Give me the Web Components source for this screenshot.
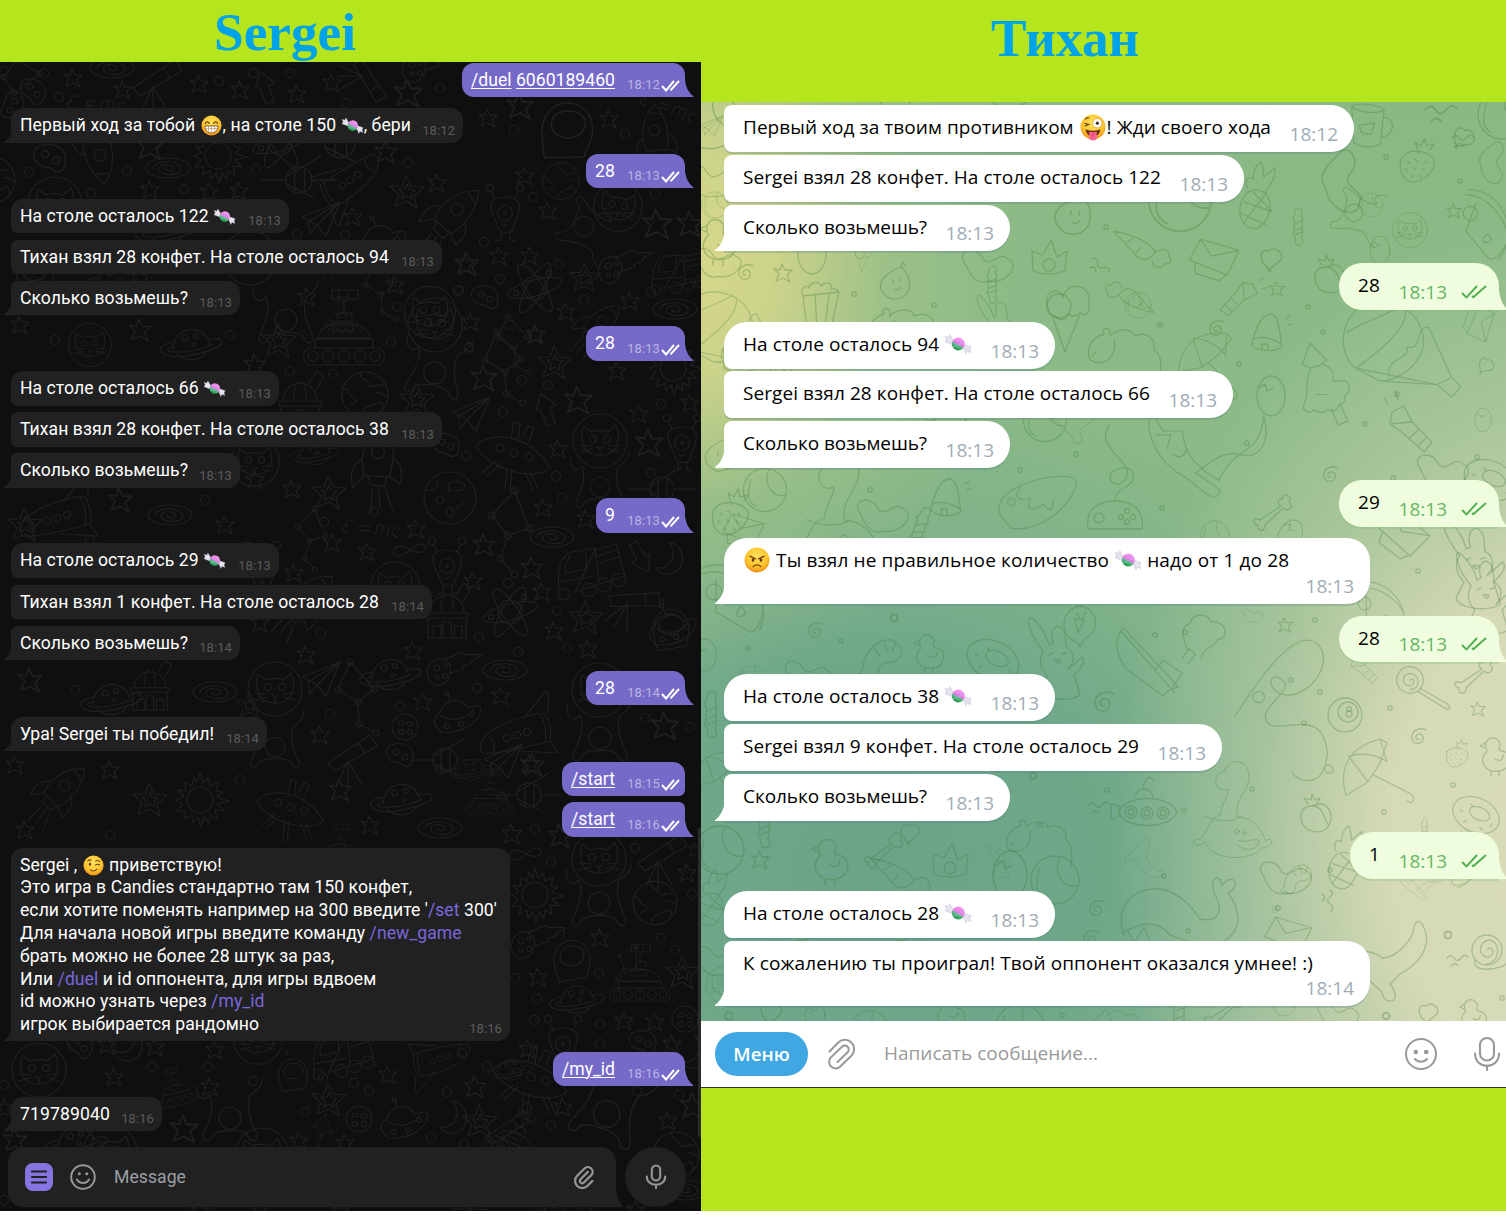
<!DOCTYPE html>
<html lang="ru">
<head>
<meta charset="utf-8">
<title>Candies duel</title>
<style>
html,body{margin:0;padding:0;background:#fff;overflow:hidden}
</style>
</head>
<body>
<duel-board></duel-board>
<script>
const SHAPES = {
  o:'<circle r="4.5"/>',
  d:'<circle r="2.2"/>',
  star:'<path d="M-1-9 2-3 9-3 4 2 7 9 0 5-7 8-4 1-9-4-3-3Z"/>',
  dstar:'<path d="M-1-17 4-6 17-5 7 4 10 16 0 9-12 14-8 3-17-6-5-6ZM0-8 2-3 8-2 4 2 5 7 0 4-5 7-4 1-8-3-2-3Z"/>',
  spiral:'<path d="M1 1c-2 1-4-1-3-3 2-4 8-2 7 3-1 6-10 6-11-1C-7-8 2-11 8-8"/>',
  galaxy:'<ellipse rx="22" ry="10"/><path d="M-15 0c3-9 27-8 28 1 0 8-24 7-22-1 3-5 15-4 14 1-1 3-9 2-8-1"/>',
  planet:'<path d="M-17 4C-16-20 15-22 19-2M-13 9C-4 18 12 16 17 6"/><path d="M-17-3C-32 0-34 8-20 11-4 14 30 4 32-2 32-7 24-7 18-5M-18 2c-7 2-5 5 3 5C0 8 17 2 22-1"/><circle cx="-5" cy="-7" r="3"/><circle cx="6" cy="-9" r="2.4"/><circle cx="4" cy="0" r="2"/>',
  globe:'<circle r="23"/><path d="M-22-6c8-1 4 7 10 8s3 7-3 8M-4-22c-1 8 6 5 8 11s8-2 14 2M-4 21C-2 10 6 12 12 8s6 6 5 8M12-2c5-2 6 3 10 3"/>',
  moonball:'<circle r="26"/><circle cx="-10" cy="2" r="4"/><path d="M-24-8c8 3 13-4 11-9M-2-14l8-3 9 3-2 6-14 1ZM6 12c0-6 8-3 8-8M-4 12c4-5 8-1 7 4s-8 3-7-4"/>',
  small:'<circle r="13"/><ellipse cx="-4" cy="-4" rx="3" ry="2"/><ellipse cx="5" cy="-3" rx="3" ry="2"/><ellipse cx="-4" cy="5" rx="3" ry="2.4"/><ellipse cx="5" cy="5" rx="2.4" ry="3"/>',
  sun:'<circle r="13"/><path d="M0-27 3-17 8-22 10-14 18-17 16-9 23-8 17-3 29 1 17 4 24 11 15 10 17 19 10 15 9 23 4 17 1 27-2 17-7 23-8 15-16 19-14 11-23 11-17 4-24 0-16-3-22-10-14-9-15-18-8-14-6-23-3-17Z"/>',
  rocket:'<path d="M-14 12C-16-10-2-28 12-34 20-18 17 2 8 17ZM6 17l-3 8-13-4-1-9M-14-3c-11 4-13 16-12 24l12-9M14 0c8 6 7 17 3 25L8 17M4-27l12 6"/><circle cx="2" cy="-7" r="6"/><path d="M-9 26l-5 20M-3 27l-2 16M3 28l3 20"/>',
  shuttle:'<path d="M-40 20C-38 4-8-10 24-14c6 8 8 18 6 28C0 22-26 28-38 26ZM4-9 26-36C30-34 28-22 28-14M0 24l38 2-8-12M-32 10c6 0 8 8 5 16M20-13c5 8 7 18 5 28"/><circle cx="-13" cy="11" r="3.6"/><circle cx="-3" cy="8" r="3.6"/><circle cx="7" cy="5" r="3.6"/>',
  ufo:'<path d="M-37-9C-30-24 16-26 37 12 20 26-22 14-37-9ZM-2-19l3-15 6 2-2 16M9-18l6-12 6 2-5 14M-17 5l-14 12M-12 7l-14 13M-6 12l-2 22M-1 13l-2 22M12 16l8 18M17 15l8 18"/><circle cx="-13" cy="-8" r="4"/><circle cx="1" cy="-3" r="4"/><circle cx="16" cy="1" r="4"/>',
  saucer:'<path d="M-22 10c-3-9 5-12 5-12 2-12 20-18 28-5 5-1 14-5 13 2-2 13-20 24-40 22Z"/><path d="M-17 0C-4 8 10 4 17-7"/><circle cx="-10" cy="11" r="2.5"/><circle cx="4" cy="9" r="2.5"/><circle cx="15" cy="-1" r="2.5"/><path d="M-6-13l-3-7"/><circle cx="-10" cy="-22" r="2"/>',
  cat:'<circle r="27"/><path d="M-17 4c-2-8-2-14 0-19l8 6c5-2 12-2 17 0l8-7c3 6 3 14 1 20-4 13-29 14-34 0Z"/><circle cx="-7" cy="-2" r="3.5"/><circle cx="7" cy="-2" r="3.5"/><path d="M-3 6l3 2 3-2M0 8v5M-8 8l-12 3M8 8l12 3M-8 5l-12-1M8 5l12-1"/>',
  body:'<path d="M-20-15C-29-4-36-20-32-25M-20-15c4 9 1 23-6 38-4 8 5 11 8 3 4-7 31-8 36 0 3 9 12 4 8-4C18 7 17-5 20-15c8-4 13-12 12-17"/><circle cy="8" r="11"/>',
  alien:'<path d="M-14-10c4-8 24-8 28 0 2 9-4 18-6 26-2 5-12 5-14 0-3-9-9-16-8-26ZM-10-14l-4-8M10-14l4-8M-4 18v9l-6 1M5 18v9l6 1"/><circle cx="-15" cy="-25" r="3.5"/><circle cx="15" cy="-25" r="3.5"/><circle r="7.5"/><circle r="1.3"/><path d="M-3 12q3 3 5-1"/>',
  rover:'<path d="M-33 15h66c10 0 10 17 0 17h-66c-10 0-10-17 0-17ZM-29 14V6h58v8M-26 5C-24-16 24-16 26 5ZM-11-2v-7h20v7ZM-6-14v-6H8v6M0-20v-13M-12-34v-9H14v9ZM-5-34v-8M4-34v-8"/><circle cx="-31" cy="23.500" r="5"/><circle cx="-16" cy="23.500" r="6"/><circle cy="23.500" r="6"/><circle cx="16" cy="23.500" r="6"/><circle cx="31" cy="23.500" r="5"/>',
  truck:'<path d="M-33 22C-36-8-28-16-20-18L3-22l4 34M3-20 24-26l9 32-50 16ZM-22-14c-4 6-6 10-4 17l20-4 0-16M-32 12l35-6M5-14l20-6M7-7l20-6"/><circle cx="-28" cy="24" r="6"/><circle cx="-3" cy="20" r="7"/><circle cx="12" cy="15" r="7"/><circle cx="27" cy="10" r="7"/>',
  house:'<path d="M-21 3h42v5h-42ZM-17 2C-17-20 17-20 17 2M-19 9v19h38V9M-6 0C-6-18-1-16-1-16M6 0C6-18 2-16 2-16M8-14l9-13 7 5-8 14M-14 28V16h8v12M-4 28V12h8v16M7 28V16h8v12"/>',
  plane:'<path d="M-20-5 18-20 4 14-5 3ZM-5 3 18-20-14 0-12 12-5 3"/>',
  const:'<path d="M0-28 24-1 8 12-12 0ZM8 12 9 34 24 42"/><circle cy="-28" r="3"/><circle cx="24" cy="-1" r="3"/><circle cx="8" cy="12" r="3"/><circle cx="-12" r="3"/><circle cx="9" cy="34" r="3"/><circle cx="26" cy="43" r="3"/>',
  atom:'<circle r="12"/><ellipse rx="28" ry="8" transform="rotate(-15)"/><ellipse rx="28" ry="8" transform="rotate(55)"/><ellipse rx="28" ry="8" transform="rotate(120)"/><circle cx="-19" cy="5" r="2.6"/><circle cx="14" cy="-15" r="2.6"/>',
  comet:'<path d="M-20 10c-6-8-1-20 8-22 8-1 15 6 12 14C-1 13-13 19-20 10ZM-6-12C4-12 4-20 14-18 12-14 22-18 32-16 24-12 20-10 22-8c-8 2-10 4-8 6-5 1-8 3-14 4"/><circle cx="-13" cy="-3" r="3"/><circle cx="-5" cy="-5" r="2"/><circle cx="-13" cy="6" r="2"/><circle cx="-5" cy="5" r="2.5"/>',
  sat:'<circle r="12"/><path d="M-10-4 20-22M-11 4l24 12M12 0h22M-4-11v22M5-11v22M-12 0h-22"/>',
  moon:'<path d="M1-16C18-12 20 12 2 16c-7 1-12-2-14-6C6 12 9-8 1-16Z"/>',
  arrow:'<path d="M-7-18-12-2h5l6 16 8-3-5-15 6-3Z"/>',
  inf:'<path d="M0 0C-16-12-22 8-10 6-3 5 3-5 10-6c10 0 6 14-10 6Z"/>',
  scope:'<path d="M-22 8 8-12l7 10-30 18ZM8-12l12-8 7 11-12 7M-2 6l-12 26M-2 6v28M-2 6l14 24"/>',
  astro:'<path d="M-18 6c-2-30 38-30 36 0l-3 14-28 5ZM-12 0c0-14 24-14 24-3 0 15-24 15-24 3Z"/><path d="M-8-20v-8"/>',
  emc:'<path d="M-18-6c-8-3-12 2-7 5-8 0-8 8 0 7M-10-1h10M-10 4h10M6 8l2-9q6-4 6 2l-1 7M14 0q7-4 7 2l-2 8M33 2c-7-5-12 8-3 9"/>',
  rock:'<path d="M-13-6C-8-15 12-13 13 0 13 13 6 14 0 8-8 8-16 2-13-6Z"/><circle cx="-4" cy="-3" r="3"/><circle cx="5" cy="2" r="3"/>',
  // playful set
  berry:'<path d="M-16-6C-8-15 8-15 18-4 20 8 8 20-6 20-16 18-20 4-16-6ZM2-10l-4-12 6 4 4-8 2 8 8-2-4 6M-10-2l2 2M-2-4l2 2M8-2l2 2M-12 6l2 2M-3 5l2 2M6 6l2 2M-6 13l2 2M3 13l2 2"/>',
  pine:'<path d="M2-8c16 3 16 30-2 40-18 2-22-20-14-33 4-7 10-8 16-7ZM-14 4l30 10M-17 16l26 12M10-6-14 26M-4-6l20 20M-10-10c-4-10 2-14 6-10 0-8 2-14 8-18 3 6 3 10 3 16l12-10c1 10-4 18-11 26"/>',
  candy:'<path d="M-6-14l2-8q5-4 8 1l-1 7q3 3 1 6v14q1 3-1 6l2 8q-4 5-9 1l-1-8q-4-3-1-6V-8q-3-3 0-6ZM-5-4l10-4M-5 4l10-4M-5 10l10-4"/>',
  carrot:'<path d="M-30-22C-6-18 10-8 14 0 8 10-2 10-8 2ZM14 0c10-6 16 0 14 4 6 6 0 10-4 8-2 6-12 6-13-2M-16-10l6-4M-6 0l4-4"/>',
  mail:'<path d="M-16-20 24-8 12 18-28 2ZM-16-20l11 18 29-6M-22 6v10L4 24l6-6"/>',
  heart:'<path d="M0 9C-14-2-9-12-2-9 3-14 12-8 9-1L-3 9Z"/>',
  balloon:'<path d="M-30-42C-56-24-52 16-34 26L-8 40c28 0 58-30 46-58C28-46-8-54-30-42ZM-34 26 56 44 72 36 46-20M-8 40 56 44M16-44C2-34-40-20-44-14M20-40C26-16-20 14-34 26M2 36c-4-24 24-18 20-34 18 6 8-22 24-22M56 44l16 14 10-12-10-10"/>',
  tree:'<path d="M-16-44-24-22-15-18c-8 20 0 22-8 42q5 8 12 2 8 6 14 0 9 4 12-5 8-2 5-9 10-7 2-16L8-4Q12-18-4-22l6-4ZM6 24l8 18 10-4-8-18M-15-18l10-3M-10 10h12"/>',
  egg:'<ellipse rx="14" ry="20"/><path d="M-12-8l6-4 2 7 6-3"/>',
  bell:'<path d="M-14 10C-12-2-6-20 4-21S14 4 16 12C8 18-10 16-14 10ZM-12 4C-4 0 8 4 15 9M-4 14v-5h6v6M20-16l4-3M22-10l4-1"/>',
  umb:'<path d="M0-42C-34-34-50-10-40 24L-14 8 0-14 8-38ZM-37-22C-18-28-2-22 8-16L0-42M-37-22-14 8M-8 0 36 22c8 7 0 14-4 8"/>',
  torch:'<path d="M-20-18-8-24 0-8 20 12 12 22-8 4-22-6ZM-22-6 0-8M6 0-2 8M14 8 6 16M-24-26l-4-6M-14-30l-2-8"/>',
  bone:'<path d="M-14 8C-22 4-22 12-16 13-18 20-8 20-9 13L9-4c5 5 12-2 6-6 4-6-6-11-7-3-7 0-3 7-1 7Z"/>',
  fish:'<path d="M-58-18C-62-36-54-40-50-30l6 10h20c2 26 18 40 38 52C36-10 56 10 62-36 70-4 54 12 34 4 12 2-4 22-10 24L16 42q-4 12-12 6L-22 28C-44 16-54-2-58-18ZM-52-16l16 0-4 14M-34 4q10 8 14-4"/>',
  pad:'<path d="M-27 14C-30-4-18-14 0-14S30-4 27 14ZM0-14C0-30 22-26 18-42 14-52-10-46-4-34 2-26 14-34 12-46-4-70-16-70-6-90"/><circle cx="-16" cy="3" r="5"/><circle cx="12" cy="-4" r="2.500"/><circle cx="12" cy="7" r="2.500"/><circle cx="6" cy="2" r="2.500"/><circle cx="18" cy="2" r="2.500"/>',
  boat:'<path d="M-44-34C-54-22-54-8-40 10L-2 38c4-6 10-8 16-10ZM-46-30 10 34M-10 10l8-10 20 14-10 14M18-2l8-10 6 6-8 10M24-10c-8-18-6-26 2-28 4-14 22-10 22-2 18-2 20 18 8 18C52-12 40-14 38-2"/>',
  rod:'<path d="M-60 80C-40 50-10 4 14 0 44 0 38 48 0 58-30 60-26 26-8 44 0 56-44 76-22 90-6 94 20 80 32 100 44 126 30 130 36 140 50 142 40 126 34 134 28 154 4 150 0 138"/><circle cx="-35" cy="60" r="6"/>',
  dino:'<path d="M0-40C10-62 40-50 30-20 20 0 14 4 16 22 36 24 48 36 54 54 64 48 68 60 50 64 30 84-20 80-26 56-40 66-48 54-36 52-24 52-24 24-6 20-4 0 6-6 4-14-14-8-20-34 0-40ZM-26 22q30 12 48 0M18 54c10 4 20-4 28 0-4 16-20 14-30 6"/><circle cx="16" cy="42" r="3"/><circle cx="26" cy="44" r="2"/>',
  sub:'<path d="M-26 0C-20-18 24-18 32 0 26 18-22 18-26 0ZM-34-8l8 2v10l-8 4ZM-10-15C-8-26 6-26 8-15M-2-23c0-8 4-10 6-12l5 3"/><circle cx="-14" r="6"/><circle cx="-14" r="3"/><circle cx="2" cy="1" r="6"/><circle cx="2" cy="1" r="3"/><circle cx="18" cy="1" r="6"/><circle cx="18" cy="1" r="3"/>',
  peach:'<path d="M-4-10C-20-10-18 12-4 15 12 20 20 2 12-8 8-14 0-12-4-10ZM-4-10C8-10 8 4 12 8M-8-12-12-18-5-16-4-22-1-16 4-18 0-10"/>',
  lolly:'<circle r="14"/><path d="M0 0c5-4 6 6-1 6-8-1-8-12 1-13 11 0 12 17 0 17M11 9l28 16q6 6 0 6L8 12"/>',
  ball8:'<circle r="17"/><circle cx="3" cy="-3" r="10"/><circle cx="4" cy="-6" r="2.4"/><circle cx="4" cy="-1" r="3"/>',
  whale:'<path d="M-36 20C-46-10-26-28 0-26 18-24 34-6 40 4 60 8 64-6 54-22 50-36 58-44 62-30 74-44 82-28 68-22 88 6 74 24 58 28M-38 18C-14 4 0 8 10 20L26 26M-32 16l6 12 10-16 6 14"/><circle cx="28" cy="16" r="2"/>',
  chick:'<path d="M-8-4C-14-16 0-22 5-12c0 6-3 6 2 8 12 1 10 20-4 20-14 2-20-12-11-20ZM-10-12l-5 3 5 2M-4 16v5M4 16v5M0 4q8 4 8-4"/>',
  donut:'<ellipse rx="27" ry="19" transform="rotate(25)"/><ellipse cx="3" cy="-3" rx="12" ry="7" transform="rotate(25)"/><path d="M-18-6l3 2M-14 8l3-2M4 14l3 2M18 10l-2 3M-6-12l2 2"/>',
  bunny:'<path d="M-14-4C-34-30-30-44-22-34-14-26-10-18-8-10L-4-12C-10-28 4-36 8-20L9-8c10 6 8 16 2 22l14-12c6 4-4 14-8 18l6 20c-12 8-40 4-40-6l7-14C-18 12-18 2-14-4ZM-8 0l4-2M5-1l4-1M-2 5h6q-2 6-6 0"/>',
  speech:'<path d="M-2 20C-22 14-20-14 0-17 20-14 20 10 4 16L0 24ZM-2 10-5-4 4-3ZM0-4l-3-6M2-4l4-7"/>',
  shrimp:'<path d="M-16 18C-14-2-2-16 14-14 26-8 28 4 14 8 4 8 0 12 0 20M-16 18q-8 6 0 8 2-6 4-2 0 6 4 2 4 4 8-6M-4-6l6 8M6-12l4 10M18-12l-4 10"/>',
  pizza:'<path d="M-50-26C-30-34 0-18 10 2 14 16 4 34-2 32L-36 12-36-20M-50-32C-16-46 24-8 8 30"/><circle cx="-38" cy="-8" r="8"/><path d="M-14 10q3-6 6 0 4 4-2 6-8 2-4-6Z"/>',
  cone:'<path d="M-12 8 0 42 14 6M-16 0C-26-20-4-24-2-12 0-28 26-28 24-8 26 4 18 8 16 2 8 10 4 4 4 4-2 14-8 8-10 6-16 6-16 0-16 0Z"/><circle cx="-6" cy="-4" r="12"/>',
  corn:'<path d="M-18-12 18-16 10 20h-24ZM-18-12c-4-8 4-12 6-8 2-8 12-6 12-2 6-6 12-2 10 3 8-2 8 6 8 3M-6-14-4 20M8-14 4 20"/>',
  crown:'<path d="M-17-6-16 14Q0 20 16 14L18-6 8 0 2-17-6-2Z"/><circle cy="8" r="6"/>',
  pear:'<path d="M-12 10C-22-4 0-14 6-16 16-8 18 8 8 14-2 18-6 16-12 10ZM6-16l2-5 3 5M-2-3v3M5-4v3M0 6q4 2 6-2"/>',
  sheep:'<path d="M-30 10C-36-4-24-14-16-16-20-24-8-24-10-14 0-24 14-20 14-14 30-20 36-8 34 0 40 2 42 10 40 30M-30 10q6 4 14 2C-6 8-4-4-6-10M-28 6l4-4"/>',
  lizard:'<path d="M30-36C40-20 34 0 8 14L-2 24q8 10 4 16-10 4-12-8L-34 10-46-4C-30-14-14-6-10-2 4-2 22-20 22-34q4-8 8-2Z"/>',
  whalebell:'<circle r="24"/><path d="M-16-12c-2 14-6 24 6 30M4-22C-2-4 10 8 22 6"/>',
  mug:'<path d="M-16-22C-10-26 12-24 18-18L14 18C4 24-10 20-14 16ZM-16-22C-8-14 12-14 18-18M18-10c14 0 10 22-3 20M-8-2 8-4 4 8-6 6Z"/>',
  duck:'<path d="M-24 0C-36-16-14-20-8-8 0 6 10-16 18-6 32 0 16 20-2 16-14 20-20 10-24 0Z"/>',
  car:'<path d="M-42 18C-48 0-30-12 0-20 30-26 40-22 38-14 32 10 0 36-30 32ZM-20-12C-30 0-20 4-10 0-16 12-8 16 4 6 8 16 14 14 14 2"/><circle cx="-30" cy="4" r="4"/>',
  snail:'<circle r="15"/><path d="M0 0c4-6 10 4 2 7C-9 8-10-8 2-10 14-9 14 12 0 14M-12 10C-16 24 14 20 22 12"/>',
  squig:'<path d="M-10 0q4-5 7 0t7 0 7-1M-6 8q4-5 7 0"/>'
};

// name x y scale rotation
const SPACE = `o 4 71;o 44 73;const 15 71 .9 95;star 73 78;star 123 90;rock 33 91 1 20;o 59 97;emc 95 102 .9;galaxy 112 68 1;scope 155 80 1;star 199 84;o 219 81;star 240 90;arrow 267 90;o 253 73;o 290 73;star 297 94;star 332 83;scope 368 78 .9 90;star 408 93 1.5;comet 425 68;o 440 88;o 346 103;rock 12 105 1 90;sun 218 156;star 150 146 1.5;rocket 98 148 1 150;galaxy 168 168 1;o 29 172;o 127 171;rock 50 158 1.2;globe -8 180;cat 55 204;star 150 190;star 209 192;star 239 191;o 256 169;o 184 189;o 91 193;sat 299 180 1.1;plane 322 222;shuttle 350 188 .9 160;dstar 407 192;star 437 183 1;o 408 163;atom 280 143;sat 340 142 1.3;star 386 152 1.2;rocket 452 215 1 28;star 353 217;o 297 234;o 345 235;planet 165 230;cat 250 258;saucer 382 240;star 465 265 1;rover 342 318 .5;const 375 285 .8;star 395 285;o 458 291;o 328 276;o 397 307;star 307 297;cat 430 312 .95;body 286 312;planet 115 280;astro 35 272;
star 488 118 1;star 520 106 1.4;o 514 130;astro 568 126 1.4 10;star 609 119;o 625 134;emc 668 106 .9 15;rocket 655 137 .9 -20;globe 561 181 .8;star 525 176;o 533 197;alien 505 213;star 548 211;body 590 230 .9 120;cat 618 207 .9 10;star 657 224 1.6;star 690 224 1.4;o 655 193;o 484 242;dstar 585 278 .9;comet 621 269;truck 680 272 .8 5;o 559 264;star 499 256;star 530 256;star 467 264 1.3;rock 485 297;o 500 279;atom 535 288;o 584 300;galaxy 675 309;star 566 312;star 630 301;o 651 292;o 459 290;star 471 322;o 510 325;rocket 598 325 .8 30;const 508 338 .8;star 536 334;dstar 555 363;o 469 347;cat 435 325;
dstar 279 341;rover 344 333 1;o 391 342;body 436 365 1 10;o 469 348;const 497 360;star 535 335;o 290 371;o 333 374;house 300 398;globe 365 395;dstar 417 400;star 484 378 1.4;o 522 380;o 548 385;plane 472 417;arrow 548 412;star 578 400 1.5;star 617 371;sun 673 368;o 661 404;star 690 403;star 639 414;o 503 412;cat 600 441;body 600 480 .9;alien 682 443;star 649 443 1.5;star 558 449;ufo 513 456;rock 446 445;o 466 456;moonball 450 498;o 556 476;o 651 473;sat 662 489;dstar 329 493;star 292 489;rocket 377 460 1.1 -10;planet 314 453 .8;cat 255 462 .9;const 307 530 .8 20;o 324 522;o 374 512;emc 370 527 .9;star 416 529;const 504 520 1.1 20;star 543 508;star 586 519;o 562 498;galaxy 552 537;truck 592 570;star 332 543;star 367 552;inf 410 550;alien 447 566;star 484 545 1.2;star 532 568 1.2;arrow 638 555 1 170;moon 668 558;star 294 573;star 473 581;o 508 583;star 542 592;scope 632 600 1 30;house 447 610;atom 510 612;dstar 586 618;star 554 631;o 557 611;rocket 305 600 1 30;cat 395 586 .9;astro 671 626;o 479 637;star 413 651;saucer 672 628;star 588 649;o 567 648;o 321 633;star 306 655;star 260 623;const 350 690;planet 389 675;comet 450 671;galaxy 505 670;o 518 652;plane 322 682;cat 275 689;body 275 740 .9;o 477 688;star 501 696;saucer 457 715;small 405 727;star 423 702;o 400 706;shuttle 520 727;cat 599 690;body 600 730;star 665 726 1.5;o 645 718;star 320 735;o 330 714;scope 350 755;sat 445 760;star 530 764 1.1;o 690 727;rock 400 755;
star 20 325;o 55 340;cat 90 345 .8;star 140 330 1.2;planet 190 345;o 230 335;shuttle 60 510;star 120 500 1.3;galaxy 170 515;o 205 500;star 225 525;dstar 25 525;o 90 540;house 150 685 .9;star 30 680 1.3;o 75 690;planet 110 700;galaxy 215 692;dstar 250 705 .8;star 15 765;rocket 60 790 .9 30;star 110 770;dstar 150 800;sun 200 800;o 240 780;ufo 290 810 .9;star 340 790 1.2;planet 400 800;o 440 770;rover 490 795 .6;star 370 825;galaxy 440 828;star 25 830;o 110 835;rover 340 850 .6;star 255 365 1.2;alien 262 570 1;star 255 480;planet 470 770 .7;
plane 504 764;star 533 765 1.2;sat 529 795;o 502 797;star 512 834 1.1;o 535 829;star 560 836 1.3;inf 526 854;o 551 862;sun 535 895;cat 599 859;body 599 895;o 635 848;scope 660 855;star 687 873;o 692 894;globe 655 903 .95;star 695 850 .8;comet 534 944;astro 572 957;star 600 938;o 661 938;const 625 960 .6 40;rover 640 977 .75;dstar 683 973;o 675 950;o 599 973;star 538 977;o 515 978;planet 576 1000 .9;o 537 999;small 685 1019;star 624 1021;star 655 1022;o 534 1020;alien 563 1044;o 600 1024;rock 643 1042;star 672 1044;o 600 1044;star 528 1049;moon 694 1052;ufo 530 1080;o 679 1095;o 637 1091;body 610 1105 1.2 20;star 563 1107;o 527 1108;star 693 1106 1.4;star 668 1121;o 551 1125;rover 515 1140 .7 25;globe 676 1155;galaxy 685 1190;star 636 1210;
rock 80 1045 1 20;star 107 1045;moon 128 1045 1 20;star 155 1047;o 152 1067;star 215 1050;cat 258 1040 .9;truck 344 1053 .9;astro 293 1072 .8;o 323 1078;shuttle 438 1065 .8 180;o 462 1053;o 487 1066;cat 39 1070;planet 510 1070 .7;star 114 1077;o 208 1067;o 253 1081;star 210 1087;rover 175 1090 .5 -15;star 388 1075;o 369 1091;o 354 1083;dstar 329 1100;star 475 1087 1.2;o 447 1092;body 230 1110 1;small 359 1119;saucer 404 1121;moon 452 1117;dstar 480 1122;star 184 1129 1.5;o 305 1112;const 320 1128 .5 20;star 299 1141;star 345 1143;o 431 1137;o 464 1144;planet 75 1143;star 15 1140 1.3;cat 110 1152;cat 262 1155;scope 505 1130 .9;o 4 1085;star 5 1108;o 4 1200;star 200 1211;o 260 1210;star 340 1211;dstar 470 1215;planet 560 1212`;

const PARTY = `plane 712 128 .6;whalebell 710 120 1.2;duck 715 180;whalebell 715 205 .55;chick 718 240 1.2;mug 895 90;duck 1010 90;pear 895 283;star 783 273;spiral 745 274;duck 720 262 .9;egg 812 254;cone 862 255 .4;d 854 294;d 934 305;corn 821 308;balloon 720 330 .8;sheep 900 330;cone 1065 310;crown 1049 257;pear 1073 215 1.2 10;duck 990 265 1;candy 993 285 .8;squig 1100 265 1 40;bunny 1000 325 .8;
pine 1257 198 .95;whalebell 1180 200 1.3;candy 1299 227 .8;carrot 1142 252 .95;mail 1216 258 .95;heart 1271 261 1.1;star 1277 289 .8;carrot 1130 295 .8 180;whalebell 1138 305 .55;torch 1238 300 .8 90;d 1308 307;d 1160 325;d 1106 227;spiral 1216 330;bell 1266 335;d 1323 332;d 1239 364;duck 1345 185 1.2 70;whalebell 1371 205 .5;cat 1410 230 .65;body 1360 215 .8 110;egg 1380 250 .7;berry 1417 163 .95;mug 1367 127 .95;d 1386 157;squig 1462 138 1;heart 1462 140 1.1 30;duck 1494 165 .8 80;star 1454 211 .8;pizza 1500 232 .9 20;d 1460 181;peach 1330 277;whalebell 1502 115;squig 1440 110 1.5;balloon 1387 345 .9;d 1397 394;tree 1325 385 .95;egg 1271 396;umb 1215 365 .8 20;torch 1412 430 1;egg 1483 420 .6;mail 1480 325 .7 90;heart 1485 367 .8 30;star 1367 488 .8;spiral 1330 476;fish 1205 450 .95;pad 1115 515 1;d 1162 508;bone 1274 512 1;d 1247 443;d 1365 424;d 1477 457;duck 1445 470;d 1393 478;sheep 1120 350;car 1040 498 .95;d 1076 454;whalebell 1045 420 .9;donut 1490 480 1;
corn 780 355;cat 950 405 .8;body 950 430 .8;dino 830 500 .9;berry 730 515;whalebell 765 490 .9;crown 740 355;pear 720 455;d 870 490;bell 945 500 1;duck 885 515;candy 920 530 1 20;mail 745 530 .8;d 1020 470;lizard 1080 415 .7;egg 1290 535 .8 30;whalebell 1215 535 .6;bunny 1475 560 1.1;mail 1405 535 1 20;
pizza 752 600 1;spiral 815 632 1;d 841 641;d 894 618 1.6;d 748 648;shrimp 878 654 1;chick 929 652 1;donut 993 660 1;bunny 1057 655;speech 1080 623;whalebell 753 680 .6;duck 810 675 .9;egg 705 655 .8;candy 712 715;boat 1165 660 .95;spiral 1103 704 1.3;star 1285 625 .8;duck 1254 615 .4;d 1315 620;d 1155 635;d 1185 632;rod 1292 640 .95;pizza 1395 610 .8;d 1418 571;bunny 1485 590 1;lolly 1410 680 .95;bone 1475 675 1;ball8 1345 715;spiral 1418 738;star 1478 709 .8;d 1390 708;d 1320 692;d 1304 723;d 1291 680;torch 1365 670 .6;umb 1380 775 .85;berry 1457 755 .6;chick 1495 755;donut 1476 815 .9;d 1384 812;d 1453 785;peach 1316 816;sub 1145 812 1;dino 1225 800 .75;d 1184 810;d 1107 790;d 1252 789;pine 1345 860 .9;duck 1288 877 1;shrimp 1295 875 .7;lizard 1145 860 .5 90;whale 1160 915 1;d 1164 876;pizza 1470 870 .7 50;fish 1420 880 .4;candy 1425 830 .5;
umb 725 780 .7 20;tree 870 790 .6;crown 950 860 1;egg 1010 875 1.2;sheep 1035 840 .9;d 1033 776 1.5;d 1040 825;squig 1098 805;bunny 1000 860 .4;candy 765 825 1;whalebell 720 850 1;chick 830 860 1.2;bone 885 850;star 760 860;heart 910 835;carrot 900 880;pine 712 900 .8;whalebell 1055 880 1;spiral 1096 910;cat 725 985 .7;duck 720 960 .9;d 729 1016 1.7;heart 771 1015 1.1;egg 815 1015 .7;whalebell 870 1030 .8;chick 950 1012;whalebell 1020 1028;d 1062 1015;candy 905 935 .8 30;shrimp 790 932;spiral 1090 940;duck 1090 980;sheep 1115 1025 .7;bone 1225 1010;whalebell 1284 1004 .5;candy 1180 1015;mail 1290 935 .9;spiral 1275 910 .5;d 1278 908;lizard 1392 960 1;snail 1487 950;squig 1457 958;d 1448 935 1.6;chick 1473 1015 .9;heart 1428 1015 1;d 1386 1016 1.5;d 1502 998;duck 1340 1015 .8;squig 1330 900 1 90;d 1330 870`;

const art = list => list.split(/;\s*/).map(s => {
  const [n, x, y, k = 1, r = 0] = s.trim().split(' ');
  return `<g transform="translate(${x} ${y}) rotate(${r}) scale(${k})">${SHAPES[n]}</g>`;
}).join('');

const face = `<defs><radialGradient id="f" cx=".5" cy=".35" r=".65"><stop offset="0" stop-color="#ffe45e"/><stop offset=".65" stop-color="#fdc42e"/><stop offset="1" stop-color="#ee8f16"/></radialGradient></defs><circle cx="12" cy="12" r="11.500" fill="url(#f)"/>`;
const EMOJI = {
  grin: face + '<path d="M5 9.500q2-3.500 4.500 0M14.500 9.500q2-3.500 4.500 0" fill="none" stroke="#6b3f12" stroke-width="1.500" stroke-linecap="round"/><path d="M4.500 12.500h15c0 5-3 8-7.500 8s-7.500-3-7.500-8Z" fill="#fff" stroke="#7a4a12" stroke-width="1"/><path d="M4.800 15.500h14.400M8.500 12.500v7M12 12.500v8M15.500 12.500v7" stroke="#a98c62" stroke-width=".7"/>',
  wink: face + '<ellipse cx="8" cy="10.500" rx="1.300" ry="1.900" fill="#6b3f12"/><path d="M14 11.500q3-2 5 0M5.500 6.800q2-2 4-.8M14.500 7q2.500-1.500 4.500.5M8.500 17q4 3 7.500-1" fill="none" stroke="#6b3f12" stroke-width="1.200" stroke-linecap="round"/>',
  zany: face + '<path d="M4 8.500l4 1-3.500 1.500M4.500 5q2-2 4-1" fill="none" stroke="#6b3f12" stroke-width="1.100"/><circle cx="16" cy="8.500" r="4.300" fill="#fff" stroke="#c58a28" stroke-width=".5"/><circle cx="16" cy="8.500" r="1.500" fill="#48301a"/><path d="M5 14q7 3 14 0-1 6.500-7 6.500T5 14Z" fill="#6a2b12"/><path d="M8.500 16.500h7v5a3.500 3 0 0 1-7 0Z" fill="#f7618f"/><path d="M12 17v4" stroke="#d33c6e"/>',
  angry: face + '<path d="M5.500 8.500l5 2.500M18.500 8.500l-5 2.500M8.500 18q3.500-3 7 0" fill="none" stroke="#7a3b10" stroke-width="1.300" stroke-linecap="round"/><ellipse cx="8.300" cy="12" rx="1.200" ry="1.700" fill="#6b3410"/><ellipse cx="15.700" cy="12" rx="1.200" ry="1.700" fill="#6b3410"/>',
  candy: '<defs><linearGradient id="c" x1=".75" y1=".05" x2=".25" y2=".95"><stop offset="0" stop-color="#f79bee"/><stop offset=".5" stop-color="#e07fe6"/><stop offset=".64" stop-color="#4fbf7c"/><stop offset="1" stop-color="#1f8f4a"/></linearGradient></defs><path d="M8.500 10 4.500 3.500 3 6 .3 4.800 1.300 8 0 10l8 3ZM16 14l3.300 7 1.200-2.500 3.200 1.500-.7-3.500 1.200-2L17 12Z" fill="#e3e4ee" stroke="#b9b8cc" stroke-width=".4"/><circle cx="12.300" cy="12" r="6" fill="url(#c)"/><path d="M7.500 14.500Q14 13.500 17.500 9" stroke="#a9b8f0" stroke-width=".9" fill="none" opacity=".6"/>'
};

class ChatEmoji extends HTMLElement {
  connectedCallback() {
    this.attachShadow({mode:'open'}).innerHTML = `<style>:host{display:inline-block;width:var(--emoji,22px);height:var(--emoji,22px);margin:0 1px;vertical-align:var(--emoji-shift,-5px);line-height:0}svg{display:block;width:100%;height:100%;overflow:visible}</style><svg viewBox="0 0 24 24">${EMOJI[this.getAttribute('name')]}</svg>`;
  }
}
customElements.define('chat-emoji', ChatEmoji);

class ChatBubble extends HTMLElement {
  connectedCallback() {
    const a = n => this.getAttribute(n);
    const light = this.hasAttribute('light'), out = this.hasAttribute('out'), tail = this.hasAttribute('tail');
    const R = light ? 23 : 12, r = light ? 8 : 6;
    const rad = out
      ? (light ? `${R}px ${R}px 0 ${R}px` : `${R}px ${a('rt')||R}px ${tail?0:6}px ${R}px`)
      : `${this.hasAttribute('first') ? R : r}px ${R}px ${R}px ${tail ? 0 : r}px`;
    const bg = out ? (light ? '#effdde' : '#766ac8') : (light ? '#fff' : '#212121');
    const tick = light
      ? '<svg class="tick" width="26" height="14" viewBox="0 0 26 14"><path d="M1 8l4.500 4.500L16 1M12 12.500 25 1M11 11l1.500 1.500" stroke="#4fae4e" stroke-width="1.900"/></svg>'
      : '<svg class="tick" width="19" height="12" viewBox="0 0 19 12"><path d="M1 6 5 10.500 13 1M9.500 10.300 18 1" stroke="#fff" stroke-width="2"/></svg>';
    this.attachShadow({mode:'open'}).innerHTML = `<style>
      :host{display:flex;position:relative;box-sizing:border-box;width:${a('w')}px;height:${a('h')}px;margin-top:${a('mt')||0}px;
        align-self:${out?'flex-end':'flex-start'};flex:none;background:${bg};border-radius:${rad};
        padding:${light?'8.6px 16px 5.2px 19px':'5.6px 8px 4px 9px'};white-space:nowrap;
        font:${light?'19px/26px "Open Sans"':'17.6px/22.8px Roboto'},sans-serif;color:${light?'#000':'#fff'};
        ${light?`box-shadow:0 2px 0 ${out?'rgba(120,190,110,.28)':'rgba(80,130,130,.28)'};`:''}
        --emoji:${light?26:21}px;--emoji-shift:${light?-6:-5}px}
      ${out ? `:host{padding-right:${light?12:5}px}` : ''}
      .text{flex:1 1 0;min-width:0}
      .run{letter-spacing:${a('ls')||0}px}
      .meta{display:flex;flex:none;align-self:flex-end;align-items:flex-end;font-size:${light?19:13}px;line-height:${light?26:16}px;
        color:${out?(light?'#6ab567':'#b9b3e2'):(light?'#a0acb6':'#5b5b5b')};letter-spacing:${light?0:.1}px}
      .tick{display:block;margin:${light?'0 0 5.5px 14px':'0 0 1.200px 1px'};fill:none;stroke-linecap:butt}
      .tail{position:absolute;bottom:0;${out?'left:100%':'right:100%'};fill:${bg}}
    </style><span class="text"><span class="run"><slot></slot></span></span><span class="meta"><span>${a('time')}</span>${out?tick:''}</span>` +
    (tail ? (out
      ? `<svg class="tail" style="margin-left:-.5px" width="9" height="${light?20:17}" viewBox="0 0 9 17" preserveAspectRatio="none"><path d="M0 0C1 8 4 13 8.500 16.500V17H0Z"/></svg>`
      : `<svg class="tail" style="margin-right:-.5px" width="${light?10:8}" height="${light?22:16}" viewBox="0 0 9 17" preserveAspectRatio="none"><path d="M9 0C8.500 8 5 13 0 16.300V17H9Z"/></svg>`) : '');
  }
  // Spread a one-line message over its nominal width.
  fit() {
    const want = +this.getAttribute('fit');
    if (!want) return;
    const t = this.shadowRoot.querySelector('.run');
    const n = Math.max(1, this.textContent.trim().length);
    t.style.letterSpacing = ((want - t.getBoundingClientRect().width) / n) + 'px';
  }
}
customElements.define('chat-bubble', ChatBubble);

class BotLink extends HTMLElement {
  connectedCallback() {
    this.attachShadow({mode:'open'}).innerHTML = `<style>:host{display:inline;color:${this.hasAttribute('plain')?'#7a67dc':'#fff'};${this.hasAttribute('plain')?'':'text-decoration:underline;text-underline-offset:2px;text-decoration-thickness:1px'}}</style><slot></slot>`;
  }
}
customElements.define('bot-link', BotLink);

class DarkComposer extends HTMLElement {
  connectedCallback() {
    this.attachShadow({mode:'open'}).innerHTML = `<style>
      :host{display:flex;gap:9px;height:60px;margin:0 15px 4px 8px}
      .box{position:relative;flex:none;width:608px;height:60px;box-sizing:border-box;display:flex;align-items:center;background:#212121;border-radius:15px 15px 0 15px;padding:0 18px 0 17px}
      .menu{width:28px;height:28px;margin-right:17px}
      .ph{font:17.6px/22px Roboto,sans-serif;color:#9a9fa5;margin-left:18px;flex:1;letter-spacing:.05px}
      .mic{width:61px;height:60px;border-radius:50%;background:#212121;display:flex;align-items:center;justify-content:center}
      svg{display:block;fill:none;stroke:#969696;stroke-linecap:round}
      .tail{position:absolute;left:100%;bottom:0;fill:#212121;stroke:none}
    </style><div class="box">
      <svg class="menu" viewBox="0 0 28 28" stroke="none"><rect width="28" height="28" rx="8" fill="#8774e1" stroke="none"/><path d="M7 8.500h14M7 14h14M7 19.500h14" stroke="#212121" stroke-width="2.200"/></svg>
      <svg width="26" height="26" viewBox="0 0 26 26" stroke-width="2"><circle cx="13" cy="13" r="11.800"/><circle cx="9.300" cy="9.800" r="1.500" fill="#969696" stroke="none"/><circle cx="16.700" cy="9.800" r="1.500" fill="#969696" stroke="none"/><path d="M7 15.500c2.500 4.700 9.500 4.700 12 0"/></svg>
      <span class="ph">Message</span>
      <svg width="27" height="27" viewBox="0 0 24 24" stroke-width="2"><path d="M15 7l-6.500 6.500a1.500 1.500 0 0 0 3 3l6.500-6.500a3 3 0 0 0-6-6l-6.500 6.500a4.500 4.500 0 0 0 9 9l4.500-4.500"/></svg>
      <svg class="tail" width="8" height="17" viewBox="0 0 8 17"><path d="M0 0C1 8 4 13 7.500 17H0Z"/></svg>
    </div><div class="mic"><svg width="22" height="26" viewBox="0 0 22 26" stroke-width="2.100"><rect x="6.800" y="1.500" width="8.400" height="15" rx="4.200"/><path d="M1.800 12.500c0 11 18.400 11 18.400 0M11 20.500V24"/></svg></div>`;
  }
}
customElements.define('dark-composer', DarkComposer);

class LightComposer extends HTMLElement {
  connectedCallback() {
    this.attachShadow({mode:'open'}).innerHTML = `<style>
      :host{display:flex;align-items:center;box-sizing:border-box;height:67px;background:#fff;border-bottom:1px solid #333;padding:0 5px 0 14px;font:19px/26px "Open Sans",sans-serif}
      .menu{width:93px;height:44px;border-radius:22px;background:#40a7e3;color:#fff;display:flex;align-items:center;justify-content:center;font-weight:600;font-size:18.800px;margin-right:19px}
      .ph{color:#999;margin-left:28px;flex:1;margin-top:-2px}
      svg{display:block;fill:none;stroke:#999;stroke-linecap:round;flex:none}
    </style><div class="menu">Меню</div>
    <svg width="29" height="33" viewBox="0 0 29 33" stroke-width="2"><path d="M2.500 13.500 11 4.800A9.300 9.300 0 0 1 24.600 17.500L13 28.800A6.600 6.600 0 0 1 3.600 19.600L15 8.700A3.900 3.900 0 0 1 20.600 14.300L10.500 24"/></svg>
    <span class="ph">Написать сообщение...</span>
    <svg width="34" height="34" viewBox="0 0 34 34" stroke-width="2"><circle cx="17" cy="17" r="15"/><circle cx="11.800" cy="15" r="2.300" fill="#999" stroke="none"/><circle cx="22.200" cy="15" r="2.300" fill="#999" stroke="none"/><path d="M11 22c3 3.500 9 3.500 12 0"/></svg>
    <svg width="28" height="36" viewBox="0 0 28 36" stroke-width="2.100" style="margin-left:35px"><rect x="7" y="2" width="14" height="22.500" rx="7"/><path d="M2 17.500c0 16.500 24 16.500 24 0M14 30v4"/></svg>`;
  }
}
customElements.define('light-composer', LightComposer);

class ChatWallpaper extends HTMLElement {
  connectedCallback() {
    const dark = this.getAttribute('kind') === 'space';
    this.attachShadow({mode:'open'}).innerHTML = `<style>
      :host{position:absolute;inset:0;overflow:hidden;background:${dark ? '#0f0f0f'
        : `radial-gradient(ellipse 340px 420px at -2% 17%,#d8d88b 0,rgba(212,214,139,.88) 28%,rgba(180,202,138,.4) 60%,rgba(170,198,138,0) 100%),
           radial-gradient(ellipse 440px 620px at 106% 80%,#dadcb9 0,rgba(217,219,184,.95) 38%,rgba(205,213,178,.45) 68%,rgba(205,213,178,0) 100%),
           radial-gradient(ellipse 560px 500px at 22% 84%,#6aa488 0,rgba(107,165,136,.9) 42%,rgba(112,170,138,.45) 70%,rgba(115,172,138,0) 100%),
           linear-gradient(180deg,#8bb986 0,#8cba88 45%,#97bd93 100%)`}}
      svg{position:absolute;inset:0;width:100%;height:100%;fill:none;stroke:${dark?'#202021':'rgba(60,120,55,.3)'};stroke-width:${dark?1.2:1.3};stroke-linejoin:round;stroke-linecap:round}
    </style><svg viewBox="${dark?'0 62 701 1149':'701 102 805 919'}">${art(dark ? SPACE : PARTY)}</svg>`;
  }
}
customElements.define('chat-wallpaper', ChatWallpaper);

// direction, top, height, width, time, fitted text width, content, extra attributes
const C = '<chat-emoji name="candy"></chat-emoji>';
const LEFT = [
  ['out',63,34,223,'18:12',144,'<bot-link>/duel</bot-link> <bot-link>6060189460</bot-link>','tail'],
  ['in',108,35,452,'18:12',391,`Первый ход за тобой <chat-emoji name="grin"></chat-emoji>, на столе 150 ${C}, бери`,'tail first'],
  ['out',154,34,99,'18:13',20,'28','tail'],
  ['in',199,34,278,'18:13',216,`На столе осталось 122 ${C}`,'first'],
  ['in',240,34,431,'18:13',369,'Тихан взял 28 конфет. На столе осталось 94',''],
  ['in',281,34,229,'18:13',168,'Сколько возьмешь?','tail'],
  ['out',326,35,99,'18:13',20,'28','tail'],
  ['in',371,35,268,'18:13',206,`На столе осталось 66 ${C}`,'first'],
  ['in',412,35,431,'18:13',369,'Тихан взял 28 конфет. На столе осталось 38',''],
  ['in',453,35,229,'18:13',168,'Сколько возьмешь?','tail'],
  ['out',498,35,89,'18:13',10,'9','tail'],
  ['in',543,35,268,'18:13',206,`На столе осталось 29 ${C}`,'first'],
  ['in',585,34,421,'18:14',359,'Тихан взял 1 конфет. На столе осталось 28',''],
  ['in',626,34,229,'18:14',168,'Сколько возьмешь?','tail'],
  ['out',671,34,99,'18:14',20,'28','tail'],
  ['in',717,34,256,'18:14',194,'Ура! Sergei ты победил!','tail first'],
  ['out',762,34,123,'18:15',44,'<bot-link>/start</bot-link>',''],
  ['out',802,35,123,'18:16',44,'<bot-link>/start</bot-link>','tail rt="6"'],
  ['in',848,193,499,'18:16',0,`Sergei , <chat-emoji name="wink"></chat-emoji> приветствую!<br>Это игра в Candies стандартно там 150 конфет,<br>если хотите поменять например на 300 введите '<bot-link plain>/set</bot-link> 300'<br>Для начала новой игры введите команду <bot-link plain>/new_game</bot-link><br>брать можно не более 28 штук за раз,<br>Или <bot-link plain>/duel</bot-link> и id оппонента, для игры вдвоем<br>id можно узнать через <bot-link plain>/my_id</bot-link><br>игрок выбирается рандомно`,'tail first ls="0.045"'],
  ['out',1052,34,132,'18:16',53,'<bot-link>/my_id</bot-link>','tail'],
  ['in',1097,34,151,'18:16',90,'719789040','tail first']
];
const RIGHT = [
  ['in',105,47,630,'18:12',528,'Первый ход за твоим противником <chat-emoji name="zany"></chat-emoji>! Жди своего хода',''],
  ['in',155,47,520,'18:13',418,'Sergei взял 28 конфет. На столе осталось 122',''],
  ['in',205,46,286,'18:13',184,'Сколько возьмешь?','tail'],
  ['out',263,47,160,'18:13',22,'28','tail'],
  ['in',322,47,331,'18:13',229,`На столе осталось 94 ${C}`,'first'],
  ['in',371,47,509,'18:13',407,'Sergei взял 28 конфет. На столе осталось 66',''],
  ['in',421,47,286,'18:13',184,'Сколько возьмешь?','tail'],
  ['out',480,47,160,'18:13',22,'29','tail'],
  ['in',538,66,646,'18:13',546,`<chat-emoji name="angry"></chat-emoji> Ты взял не правильное количество ${C} надо от 1 до 28`,'tail first'],
  ['out',616,46,160,'18:13',22,'28','tail'],
  ['in',674,47,331,'18:13',229,`На столе осталось 38 ${C}`,'first'],
  ['in',724,47,498,'18:13',396,'Sergei взял 9 конфет. На столе осталось 29',''],
  ['in',774,47,286,'18:13',184,'Сколько возьмешь?','tail'],
  ['out',832,47,149,'18:13',11,'1','tail'],
  ['in',891,47,331,'18:13',229,`На столе осталось 28 ${C}`,'first'],
  ['in',941,65,646,'18:14',570,'К сожалению ты проиграл! Твой оппонент оказался умнее! :)','tail']
];
const bubbles = (list, start, extra) => {
  let y = start;
  return list.map(([dir, top, h, w, time, fit, body, attrs]) => {
    const mt = top - y; y = top + h;
    return `<chat-bubble ${dir} ${extra} ${attrs} w="${w}" h="${h}" mt="${mt}" time="${time}" fit="${fit}">${body}</chat-bubble>`;
  }).join('');
};

class DuelBoard extends HTMLElement {
  connectedCallback() {
    this.attachShadow({mode:'open'}).innerHTML = `<style>
      :host{display:flex;width:1506px;height:1211px;background:#b5e61d}
      section{display:flex;flex-direction:column;flex:none}
      .l{width:701px}.r{width:805px}
      h1{margin:0;flex:none;font:bold 53.3px/60px "Liberation Serif",serif;color:#00a2e8}
      .l h1{height:62px;padding-left:214px;box-sizing:border-box;padding-top:3px}
      .r h1{height:102px;padding-left:290px;box-sizing:border-box;padding-top:9px}
      .pane{position:relative;overflow:hidden;display:flex;flex-direction:column}
      .l .pane{height:1149px}
      .r .pane{height:919px}
      .list{position:relative;flex:1;display:flex;flex-direction:column}
      .l .list{padding:0 16px 0 11px}
      .r .list{padding:0 7px 0 23px}
      dark-composer{position:relative}
      .thumb{position:absolute;right:0;top:766px;width:3px;height:309px;background:#2b2b2c;border-radius:2px}
    </style>
    <section class="l"><h1>Sergei</h1><div class="pane"><chat-wallpaper kind="space"></chat-wallpaper>
      <div class="list">${bubbles(LEFT, 62, '')}</div><dark-composer></dark-composer><div class="thumb"></div></div></section>
    <section class="r"><h1>Тихан</h1><div class="pane"><chat-wallpaper kind="party"></chat-wallpaper>
      <div class="list">${bubbles(RIGHT, 102, 'light')}</div></div><light-composer></light-composer></section>`;
    this.shadowRoot.querySelectorAll('chat-bubble').forEach(b => b.fit());
  }
}
customElements.define('duel-board', DuelBoard);
</script>
</body>
</html>
